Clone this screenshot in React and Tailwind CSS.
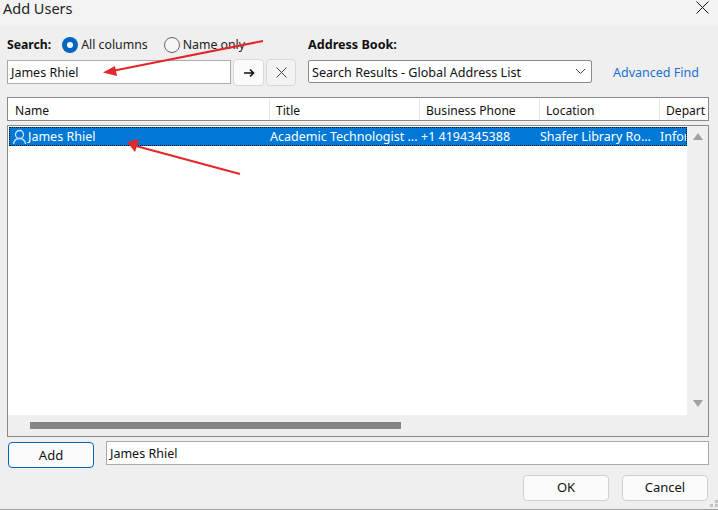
import React from "react";

const columns = [
  { name: "Name", width: "w-[262px]", pad: "pl-[7px]" },
  { name: "Title", width: "w-[150px]", pad: "pl-[6px]" },
  { name: "Business Phone", width: "w-[120px]", pad: "pl-[6px]" },
  { name: "Location", width: "w-[120px]", pad: "pl-[6px]" },
  { name: "Depart", width: "flex-1", pad: "pl-[6px]" },
];

const Arrow = ({ x1, y1, x2, y2, head }) => (
  <g>
    <line x1={x1} y1={y1} x2={x2} y2={y2} stroke="#e5262a" strokeWidth="2" />
    <polygon points={head} fill="#e5262a" />
  </g>
);

const DialogButton = ({ children, className = "" }) => (
  <button className={`h-[26px] w-[86px] rounded-[4px] border border-[#d0d0d0] bg-[#fbfbfb] text-[13px] text-[#111] ${className}`}>
    {children}
  </button>
);

export default function App() {
  return (
    <div className="relative h-[510px] w-[718px] overflow-hidden border-b border-[#a0a0a0] bg-[#efefef] font-['Noto_Sans','Open_Sans',sans-serif] text-[12.5px] text-[#111]">
      {/* title bar */}
      <div className="flex h-[26px] items-start justify-between bg-[#f3f3f3] pl-[3px] pr-[9px]">
        <span className="text-[14.5px] leading-[17px] text-[#222]">Add Users</span>
        <svg width="13" height="13" viewBox="0 0 13 13" className="mt-[1px]">
          <path d="M0.5 0.5 12.5 12.5M12.5 0.5 0.5 12.5" stroke="#111" strokeWidth="1" fill="none" />
        </svg>
      </div>

      {/* search row */}
      <div className="flex px-[7px] pt-[9px]">
        <div className="w-[289px]">
          <div className="flex h-[20px] items-center">
            <span className="mr-[11px] text-[12.2px] font-bold leading-none">Search:</span>
            <span className="mr-[3px] flex h-4 w-4 items-center justify-center rounded-full bg-[#0067c0]">
              <span className="h-[6px] w-[6px] rounded-full bg-white" />
            </span>
            <span className="mr-[16px] text-[12.3px] text-[#222]">All columns</span>
            <span className="mr-[3px] h-4 w-4 rounded-full border border-[#666] bg-[#f5f5f5]" />
            <span className="text-[12.3px] text-[#222]">Name only</span>
          </div>
          <div className="mt-[5px] flex items-start">
            <div className="flex h-6 w-[224px] items-center border border-[#a9a9a9] bg-white pl-[3px] pt-[2px]">James Rhiel</div>
            <button className="ml-[2px] flex h-[27px] w-[31px] -translate-y-[1px] items-center justify-center rounded-[4px] border border-[#d8d8d8] bg-[#fbfbfb]">
              <svg width="12" height="10" viewBox="0 0 12 10">
                <path d="M1 5H10.5M7 1.5 10.5 5 7 8.5" stroke="#111" strokeWidth="1.6" fill="none" />
              </svg>
            </button>
            <button className="ml-[2px] flex h-[27px] w-[30px] -translate-y-[1px] items-center justify-center rounded-[4px] border border-[#d8d8d8] bg-[#f3f3f3]">
              <svg width="13" height="13" viewBox="0 0 13 13">
                <path d="M1.5 1.5 11.5 11.5M11.5 1.5 1.5 11.5" stroke="#444" strokeWidth="1" fill="none" />
              </svg>
            </button>
          </div>
        </div>
        <div className="ml-[12px]">
          <div className="flex h-[20px] items-center text-[12.6px] font-bold">Address Book:</div>
          <div className="mt-[5px] flex items-center">
            <div className="flex h-[23px] w-[284px] items-center justify-between rounded-[2px] border border-[#8a8a8a] bg-white pl-[3px] pr-[5px]">
              <span className="pt-[3px] text-[12.6px]">Search Results - Global Address List</span>
              <svg width="11" height="7" viewBox="0 0 11 7">
                <path d="M1 1 5.5 5.5 10 1" stroke="#444" strokeWidth="1" fill="none" />
              </svg>
            </div>
            <span className="ml-[21px] pt-[3px] text-[#1a6fd4]">Advanced Find</span>
          </div>
        </div>
      </div>

      {/* column headers */}
      <div className="mx-[7px] mt-[10px] flex h-6 w-[702px] items-center border border-[#8a8a8a] bg-white text-[12.1px]">
        {columns.map((col, i) => (
          <div
            key={col.name}
            className={`flex h-[21px] items-center whitespace-nowrap pt-[5px] ${col.pad} ${col.width} ${i < 4 ? "border-r border-[#e5e5e5]" : ""}`}
          >
            {col.name}
          </div>
        ))}
      </div>

      {/* results list */}
      <div className="mx-[7px] mt-[4px] flex h-[312px] w-[702px] flex-col border border-[#8a8a8a] bg-[#efefef]">
        <div className="flex min-h-0 flex-1">
          <div className="min-w-0 flex-1 bg-white pt-[1px] pl-[1px]">
            <div className="flex h-[19px] items-center overflow-hidden whitespace-nowrap border border-dotted border-[#111] bg-[#0078d7] pt-[2px] text-white">
              <div className="flex w-[260px] shrink-0 items-center pl-[2px]">
                <svg width="15" height="16" viewBox="0 0 15 16" className="mr-[1px] -translate-y-[1px]">
                  <circle cx="7.5" cy="5.5" r="4" stroke="#cfe3f5" strokeWidth="1.3" fill="none" />
                  <path d="M1.5 15C2 11.5 4.5 9.5 7.5 9.5S13 11.5 13.5 15" stroke="#cfe3f5" strokeWidth="1.3" fill="none" />
                </svg>
                James Rhiel
              </div>
              <div className="w-[151px] shrink-0 truncate">Academic Technologist ...</div>
              <div className="w-[119px] shrink-0">+1 4194345388</div>
              <div className="w-[120px] shrink-0 truncate">Shafer Library Ro...</div>
              <div className="min-w-0 flex-1 overflow-hidden">Infor</div>
            </div>
          </div>
          <div className="flex w-[21px] shrink-0 flex-col items-center justify-between py-[7px] pb-[8px]">
            <svg width="10" height="7" viewBox="0 0 10 7"><polygon points="5,0 10,7 0,7" fill="#a0a0a0" /></svg>
            <svg width="10" height="7" viewBox="0 0 10 7"><polygon points="0,0 10,0 5,7" fill="#a0a0a0" /></svg>
          </div>
        </div>
        <div className="flex h-[21px] items-center pl-[22px]">
          <div className="h-[7px] w-[371px] bg-[#858585]" />
        </div>
      </div>

      {/* add row */}
      <div className="mt-[4px] flex items-start px-[8px]">
        <button className="mt-[1px] h-[26px] w-[86px] rounded-[4px] border border-[#0067c0] bg-[#fbfbfb] pt-[1px] text-[13px]">Add</button>
        <div className="ml-[12px] flex h-6 w-[603px] items-center border border-[#a9a9a9] bg-white pl-[3px] pt-[2px]">James Rhiel</div>
      </div>

      {/* dialog buttons */}
      <div className="mt-[7px] flex justify-end gap-[13px] pr-[10px]">
        <DialogButton>OK</DialogButton>
        <DialogButton>Cancel</DialogButton>
      </div>

      {/* resize grip */}
      <svg width="8" height="8" viewBox="0 0 8 8" className="absolute bottom-[1px] right-0">
        <rect x="5" y="0" width="3" height="3" fill="#c4c4c4" />
        <rect x="0" y="4" width="3" height="3" fill="#c4c4c4" />
        <rect x="5" y="4" width="3" height="3" fill="#c4c4c4" />
      </svg>

      {/* red annotation arrows */}
      <svg width="718" height="510" className="pointer-events-none absolute left-0 top-0">
        <Arrow x1={263} y1={41} x2={112} y2={71} head="103,72.5 115,66 117,76" />
        <Arrow x1={240} y1={174} x2={136} y2={146} head="127,142 139,139 135,152" />
      </svg>
    </div>
  );
}
